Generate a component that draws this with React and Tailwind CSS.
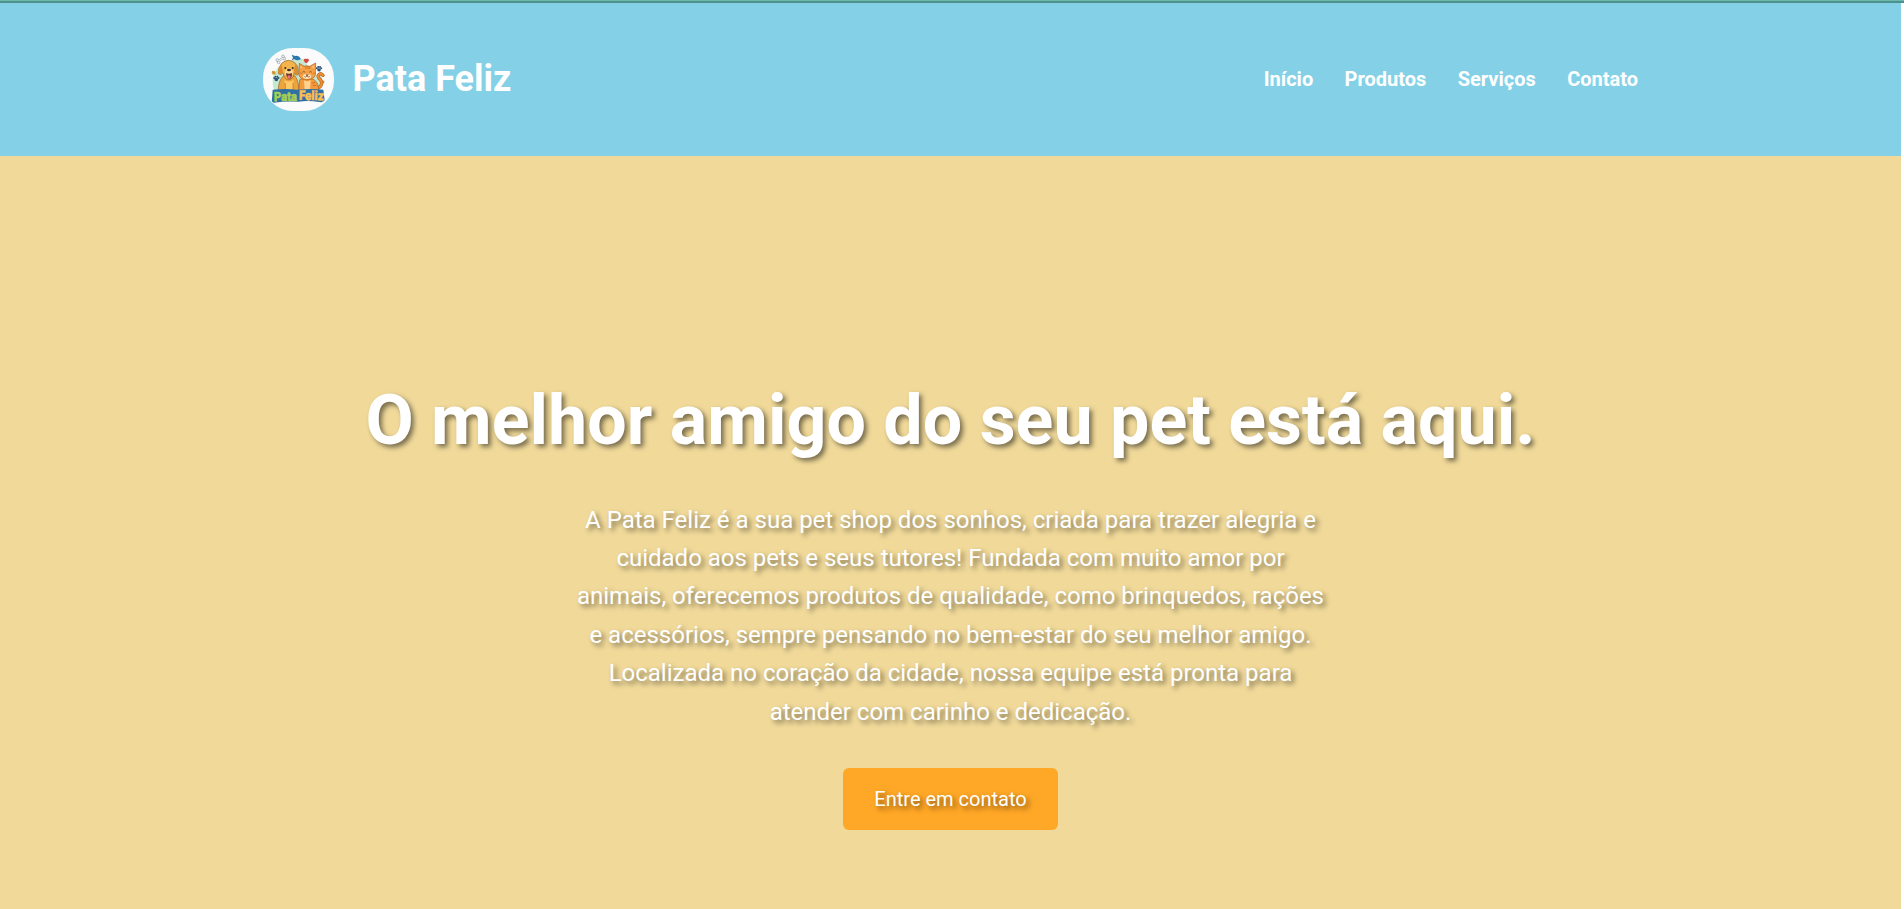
const links = ["Início", "Produtos", "Serviços", "Contato"];

function Paw({ x, y, color = "#2c5278" }) {
  return (
    <g transform={`translate(${x} ${y})`} fill={color}>
      <ellipse cx="0" cy="3.5" rx="5.5" ry="5" />
      <circle cx="-6.5" cy="-1" r="3" />
      <circle cx="-2.5" cy="-5" r="3" />
      <circle cx="3" cy="-5" r="3" />
      <circle cx="6.5" cy="-1" r="3" />
    </g>
  );
}

function Logo() {
  return (
    <svg viewBox="24 24 213 189" className="h-[63px] w-[71px] shrink-0 rounded-[30px] bg-[#fbfbfb]" aria-hidden="true">
      <path d="M58 150C44 118 60 76 98 66C136 48 188 58 197 96C205 120 200 140 190 156Z" fill="#c4e8d0" />
      <path d="M150 62C178 56 196 76 192 102L176 110Z" fill="#fbfbfb" />
      {/* bone */}
      <path d="M68 64L86 53" stroke="#8d9aa5" strokeWidth="6" strokeLinecap="round" />
      <g fill="#f4f6f7" stroke="#8d9aa5" strokeWidth="2">
        <circle cx="67" cy="60" r="4" /><circle cx="71" cy="67" r="4" /><circle cx="84" cy="49" r="4" /><circle cx="88" cy="56" r="4" />
      </g>
      <path d="M70 63L85 54" stroke="#f4f6f7" strokeWidth="3.5" />
      {/* fish */}
      <path d="M110 44L120 48Q131 44 138 57Q127 64 118 58L110 61L114 53Z" fill="#2b78ad" />
      <path d="M154 70C141 61 147 53 154 57C161 53 167 61 154 70Z" fill="#d84842" />
      <Paw x={64} y={115} />
      <Paw x={192} y={86} />
      <circle cx="56" cy="98" r="6" fill="#e2a642" />
      <path d="M51 94L61 102" stroke="#a46e2a" strokeWidth="2" />
      <circle cx="204" cy="126" r="4.5" fill="#d8953c" />
      {/* cat */}
      <path d="M182 146C203 142 204 125 192 115C184 105 197 96 204 106" fill="none" stroke="#a85a1d" strokeWidth="10" strokeLinecap="round" />
      <path d="M182 146C203 142 204 125 192 115C184 105 197 96 204 106" fill="none" stroke="#ee8e30" strokeWidth="7" strokeLinecap="round" />
      <path d="M132 152L134 119Q153 108 177 119Q192 129 191 152Z" fill="#f39a3c" stroke="#a85a1d" strokeWidth="2" />
      <path d="M133 70L147 79Q155 76 164 79L182 69L181 93Q186 114 162 119H148Q127 114 132 92Z" fill="#f6a044" stroke="#a85a1d" strokeWidth="2" />
      <path d="M137 77L143 81L137 87ZM177 76L178 87L171 81Z" fill="#f9c69b" />
      <path d="M153 78V87M159 78V87M165 80L163 87M134 99L141 101M180 99L173 101M180 127L170 130M184 136L173 137" stroke="#c76a20" strokeWidth="2.3" />
      <ellipse cx="156" cy="109" rx="12" ry="8" fill="#ffe4bc" />
      <path d="M142 97Q147 92 151 97M162 97Q166 92 171 97M153 104H160L156 108ZM156 108Q152 114 148 109M156 108Q160 114 165 109" fill="none" stroke="#70401f" strokeWidth="2" />
      <path d="M147 121Q157 127 167 120L165 151H149Z" fill="#ffd28e" />
      {/* dog */}
      <path d="M70 151C70 129 78 112 87 107H119C130 120 132 138 130 152Z" fill="#eda53b" stroke="#985a1d" strokeWidth="2" />
      <path d="M80 70Q101 52 121 70Q133 82 128 105Q121 108 118 98Q116 118 101 119Q87 117 84 98Q78 108 70 101Q69 82 80 70Z" fill="#f3b44b" stroke="#985a1d" strokeWidth="2" />
      <path d="M79 74Q67 84 71 101Q80 106 84 93ZM121 73Q132 85 127 104Q120 104 117 91Z" fill="#dc8c2d" />
      <path d="M91 92Q101 78 113 92L114 103Q102 112 89 103Z" fill="#ffd993" />
      <path d="M93 99Q102 103 111 99Q111 117 102 117Q94 114 93 99Z" fill="#713633" />
      <ellipse cx="102" cy="111" rx="5" ry="5.5" fill="#ea7782" />
      <ellipse cx="102" cy="90" rx="6" ry="4" fill="#3c3130" />
      <circle cx="91" cy="84" r="3" fill="#3c2c23" /><circle cx="113" cy="84" r="3" fill="#3c2c23" />
      <path d="M88 120Q102 130 116 119L113 151H92Z" fill="#ffc967" />
      <path d="M91 129V149M114 128V149" stroke="#b87022" strokeWidth="2" />
      {/* name plate */}
      <path d="M53 149Q91 145 128 149Q168 145 205 149L209 181Q205 188 193 186Q160 181 130 185Q92 183 57 188Q48 185 51 176Z" fill="#2f70a3" />
      <g fontFamily="Roboto, sans-serif" fontWeight="900" fontSize="39" paintOrder="stroke" strokeLinejoin="round">
        <text x="57" y="183" textLength="69" lengthAdjust="spacingAndGlyphs" fill="#a5cf52" stroke="#a5cf52" strokeWidth="1.5" transform="rotate(-1 90 170)">Pata</text>
        <text x="132" y="180" textLength="74" lengthAdjust="spacingAndGlyphs" fill="#fbbd55" stroke="#fbbd55" strokeWidth="1.5" transform="rotate(1 166 170)">Feliz</text>
      </g>
    </svg>
  );
}

export default function App() {
  return (
    <div className="flex h-[909px] flex-col overflow-hidden bg-white font-[Roboto,sans-serif] text-white">
      <div className="h-[3px] shrink-0 border-b-2 border-[#4f918c] bg-[#6bb8ae]" />
      <div className="flex w-[1901px] grow flex-col">
        <header className="h-[153px] shrink-0 bg-[#84d1e7]">
          <div className="mx-auto flex h-full w-[1376px] items-center justify-between">
            <a className="flex items-center gap-[19px]">
              <Logo />
              <span className="pb-[2px] text-[36px] leading-[58px] font-bold">Pata Feliz</span>
            </a>
            <nav className="flex gap-[31.4px] pr-[0.5px] pb-[2px] text-[20px] leading-8 font-bold">
              {links.map((label) => (
                <a key={label}>{label}</a>
              ))}
            </nav>
          </div>
        </header>
        <main className="flex grow flex-col items-center bg-[#f0d999] pt-[207px] text-center text-shadow-[3px_3px_5px_rgba(0,0,0,0.5)]">
          <h1 className="text-[70px] leading-[115px] font-bold whitespace-nowrap">O melhor amigo do seu pet está aqui.</h1>
          <p className="mt-[22.6px] w-[750px] text-[24px] leading-[38.4px]">
            A Pata Feliz é a sua pet shop dos sonhos, criada para trazer alegria e cuidado aos pets e seus tutores! Fundada com
            muito amor por animais, oferecemos produtos de qualidade, como brinquedos, rações e acessórios, sempre pensando no
            bem-estar do seu melhor amigo. Localizada no coração da cidade, nossa equipe está pronta para atender com carinho e
            dedicação.
          </p>
          <a className="mt-[37px] rounded-[6px] bg-[#ffa726] px-[31px] py-[15px] text-[20px] leading-8">Entre em contato</a>
        </main>
      </div>
    </div>
  );
}
